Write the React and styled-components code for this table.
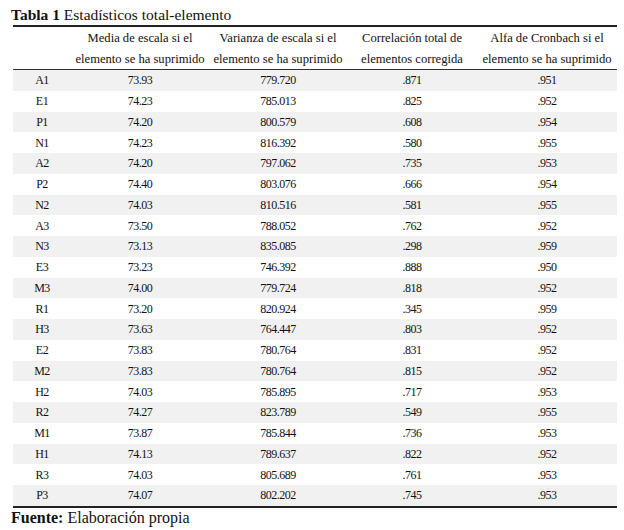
import React from "react";
import styled, { createGlobalStyle } from "styled-components";

const rows = [
  ["A1", "73.93", "779.720", ".871", ".951"],
  ["E1", "74.23", "785.013", ".825", ".952"],
  ["P1", "74.20", "800.579", ".608", ".954"],
  ["N1", "74.23", "816.392", ".580", ".955"],
  ["A2", "74.20", "797.062", ".735", ".953"],
  ["P2", "74.40", "803.076", ".666", ".954"],
  ["N2", "74.03", "810.516", ".581", ".955"],
  ["A3", "73.50", "788.052", ".762", ".952"],
  ["N3", "73.13", "835.085", ".298", ".959"],
  ["E3", "73.23", "746.392", ".888", ".950"],
  ["M3", "74.00", "779.724", ".818", ".952"],
  ["R1", "73.20", "820.924", ".345", ".959"],
  ["H3", "73.63", "764.447", ".803", ".952"],
  ["E2", "73.83", "780.764", ".831", ".952"],
  ["M2", "73.83", "780.764", ".815", ".952"],
  ["H2", "74.03", "785.895", ".717", ".953"],
  ["R2", "74.27", "823.789", ".549", ".955"],
  ["M1", "73.87", "785.844", ".736", ".953"],
  ["H1", "74.13", "789.637", ".822", ".952"],
  ["R3", "74.03", "805.689", ".761", ".953"],
  ["P3", "74.07", "802.202", ".745", ".953"],
];

const headers = [
  ["", ""],
  ["Media de escala si el", "elemento se ha suprimido"],
  ["Varianza de escala si el", "elemento se ha suprimido"],
  ["Correlación total de", "elementos corregida"],
  ["Alfa de Cronbach si el", "elemento se ha suprimido"],
];

export default function App() {
  return (
    <>
      <GlobalStyle />
      <Page>
        <Caption>
          <b>Tabla 1</b> Estadísticos total-elemento
        </Caption>
        <Table>
          <HeaderRow>
            {headers.map((h, i) => (
              <HeaderCell key={i}>
                {h[0]}
                <br />
                {h[1]}
              </HeaderCell>
            ))}
          </HeaderRow>
          {rows.map((r, i) => (
            <Row key={r[0]} $shaded={i % 2 === 0}>
              {r.map((c, j) => (
                <Cell key={j}>{c}</Cell>
              ))}
            </Row>
          ))}
        </Table>
        <Source>
          <b>Fuente:</b> Elaboración propia
        </Source>
      </Page>
    </>
  );
}

const GlobalStyle = createGlobalStyle`
  body {
    margin: 0;
    background: #fff;
    font-family: "Liberation Serif", "Times New Roman", serif;
    color: #111;
  }
`;

const Page = styled.div`
  width: 624px;
  padding-top: 6px;
`;

const Caption = styled.div`
  margin-left: 11px;
  font-size: 15.5px;
  line-height: 18px;
  height: 19px;
`;

const Table = styled.div`
  margin-left: 13px;
  width: 604px;
  border-top: 2px solid #222;
  border-bottom: 2px solid #222;
`;

const columns = "58px 138px 138px 130px 140px";

const HeaderRow = styled.div`
  display: grid;
  grid-template-columns: ${columns};
  height: 43px;
  padding-top: 1px;
  border-bottom: 1px solid #333;
  box-sizing: border-box;
`;

const HeaderCell = styled.div`
  text-align: center;
  font-size: 12.6px;
  line-height: 21px;
  white-space: nowrap;
`;

const Row = styled.div`
  display: grid;
  grid-template-columns: ${columns};
  height: 20.75px;
  align-items: center;
  background: ${(p) => (p.$shaded ? "#f1f1f1" : "#fff")};
`;

const Cell = styled.div`
  text-align: center;
  font-size: 12px;
  letter-spacing: -0.5px;
  line-height: 14px;
`;

const Source = styled.div`
  margin-left: 11px;
  font-size: 16px;
  line-height: 18px;
  margin-top: 1px;
`;
